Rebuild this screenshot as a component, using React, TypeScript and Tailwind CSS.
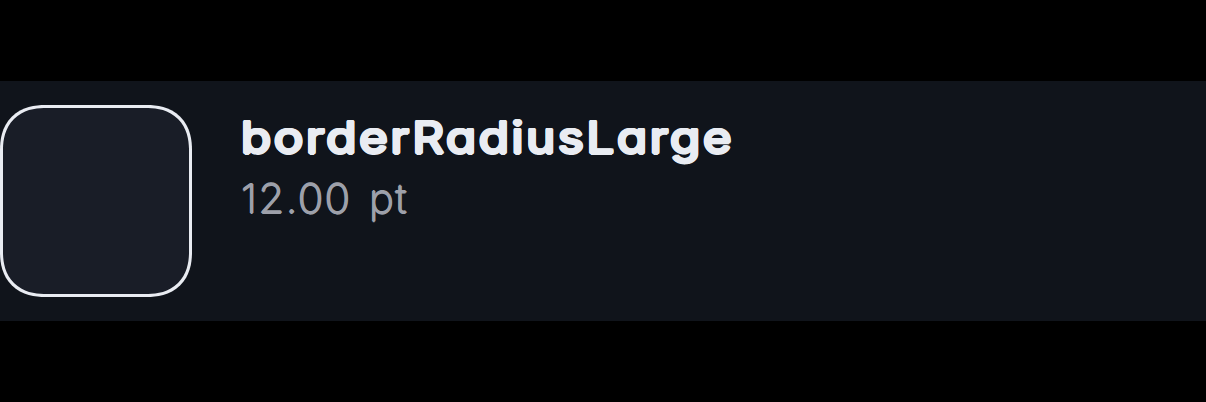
export default function App() {
  return (
    <main className="h-[402px] bg-black pt-[81px]">
      <section className="flex h-60 items-start bg-[#10141b] pt-6">
        <div className="h-48 w-48 shrink-0 rounded-[40px] border-[3px] border-[#e9ecf2] bg-[#191d27] supports-[corner-shape:squircle]:rounded-[45px] supports-[corner-shape:squircle]:[corner-shape:superellipse(1.2)]" />
        <div className="ml-[49px] pt-[5px] font-['Inter','Lato',sans-serif] [font-feature-settings:'cv11','ss03']">
          <h1 className="w-max origin-left scale-x-[1.12] text-[44px] leading-[54px] font-normal tracking-[2.33px] text-[#e9ecf2] [text-shadow:1.5px_0_#e9ecf2,-1.5px_0_#e9ecf2,0_1.5px_#e9ecf2,0_-1.5px_#e9ecf2,1.1px_1.1px_#e9ecf2,-1.1px_1.1px_#e9ecf2,1.1px_-1.1px_#e9ecf2,-1.1px_-1.1px_#e9ecf2]">borderRadiusLarge</h1>
          <p className="w-max origin-left scale-x-[1.05] text-[40px] leading-[70px] font-extralight tracking-[1.4px] [word-spacing:4px] text-[#9da0aa] [text-shadow:0.8px_0_#9da0aa,-0.8px_0_#9da0aa,0_0.8px_#9da0aa,0_-0.8px_#9da0aa]">12.00 pt</p>
        </div>
      </section>
    </main>
  );
}
